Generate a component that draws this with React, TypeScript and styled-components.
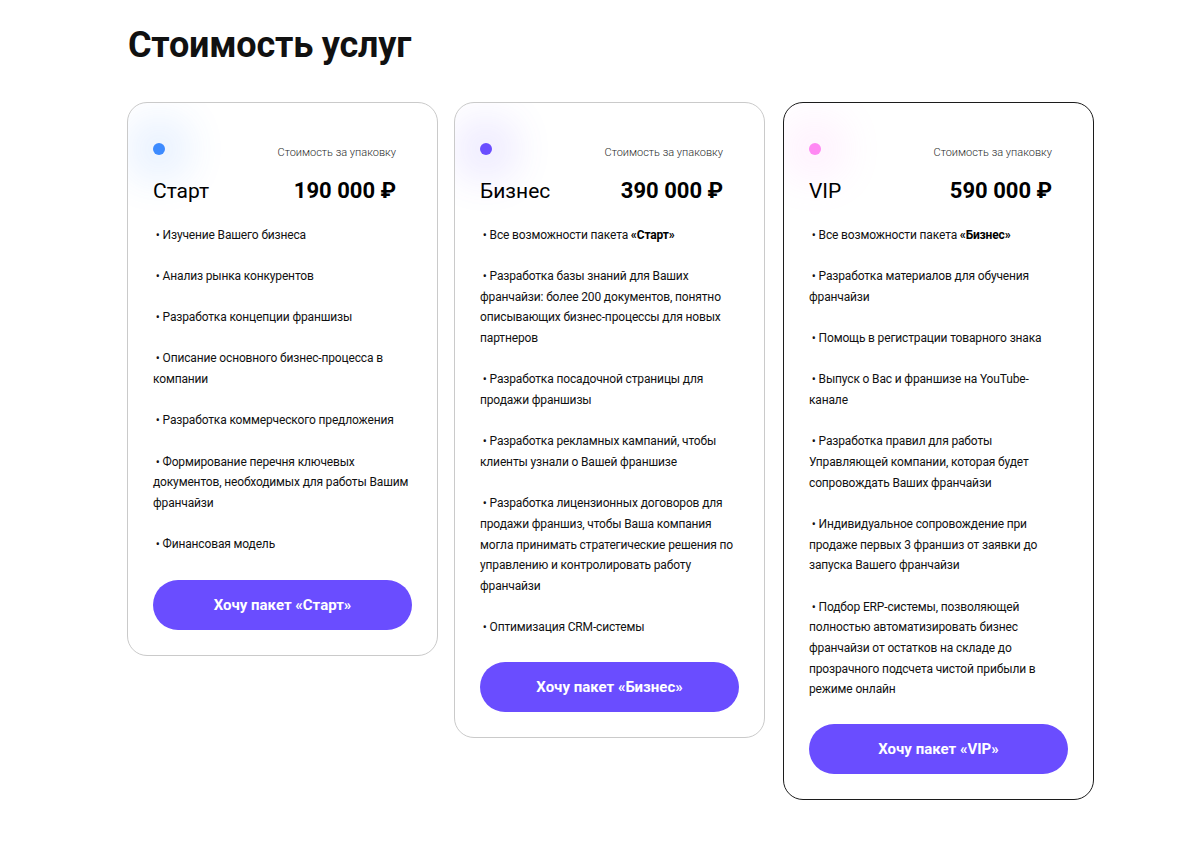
import type { FC } from 'react'
import styled, { createGlobalStyle } from 'styled-components'

interface Plan {
  name: string
  price: string
  dot: string
  glow: string
  featured?: boolean
  items: { text: string; bold?: string }[]
  cta: string
}

const plans: Plan[] = [
  {
    name: 'Старт',
    price: '190 000 ₽',
    dot: '#3d8bff',
    glow: 'rgba(61, 139, 255, 0.10)',
    items: [
      { text: 'Изучение Вашего бизнеса' },
      { text: 'Анализ рынка конкурентов' },
      { text: 'Разработка концепции франшизы' },
      { text: 'Описание основного бизнес-процесса в компании' },
      { text: 'Разработка коммерческого предложения' },
      { text: 'Формирование перечня ключевых документов, необходимых для работы Вашим франчайзи' },
      { text: 'Финансовая модель' },
    ],
    cta: 'Хочу пакет «Старт»',
  },
  {
    name: 'Бизнес',
    price: '390 000 ₽',
    dot: '#6a4dff',
    glow: 'rgba(106, 77, 255, 0.10)',
    items: [
      { text: 'Все возможности пакета ', bold: '«Старт»' },
      { text: 'Разработка базы знаний для Ваших франчайзи: более 200 документов, понятно описывающих бизнес-процессы для новых партнеров' },
      { text: 'Разработка посадочной страницы для продажи франшизы' },
      { text: 'Разработка рекламных кампаний, чтобы клиенты узнали о Вашей франшизе' },
      { text: 'Разработка лицензионных договоров для продажи франшиз, чтобы Ваша компания могла принимать стратегические решения по управлению и контролировать работу франчайзи' },
      { text: 'Оптимизация CRM-системы' },
    ],
    cta: 'Хочу пакет «Бизнес»',
  },
  {
    name: 'VIP',
    price: '590 000 ₽',
    dot: '#ff88f3',
    glow: 'rgba(255, 136, 243, 0.10)',
    featured: true,
    items: [
      { text: 'Все возможности пакета ', bold: '«Бизнес»' },
      { text: 'Разработка материалов для обучения франчайзи' },
      { text: 'Помощь в регистрации товарного знака' },
      { text: 'Выпуск о Вас и франшизе на YouTube-\nканале' },
      { text: 'Разработка правил для работы Управляющей компании, которая будет сопровождать Ваших франчайзи' },
      { text: 'Индивидуальное сопровождение при продаже первых 3 франшиз от заявки до запуска Вашего франчайзи' },
      { text: 'Подбор ERP-системы, позволяющей полностью автоматизировать бизнес франчайзи от остатков на складе до прозрачного подсчета чистой прибыли в режиме онлайн' },
    ],
    cta: 'Хочу пакет «VIP»',
  },
]

const App: FC = () => (
  <>
    <GlobalStyle />
    <Page>
      <Heading>Стоимость услуг</Heading>
      <Cards>
        {plans.map(plan => (
          <Card key={plan.name} $featured={plan.featured}>
            <CardTop>
              <Dot $color={plan.dot} $glow={plan.glow} />
              <PriceNote>Стоимость за упаковку</PriceNote>
            </CardTop>
            <TitleRow>
              <PlanName>{plan.name}</PlanName>
              <Price>{plan.price}</Price>
            </TitleRow>
            <Features>
              {plan.items.map(item => (
                <Feature key={item.text}>
                  {`\u00a0• ${item.text}`}
                  {item.bold && <b>{item.bold}</b>}
                </Feature>
              ))}
            </Features>
            <OrderButton type="button">{plan.cta}</OrderButton>
          </Card>
        ))}
      </Cards>
    </Page>
  </>
)

const GlobalStyle = createGlobalStyle`
  body {
    margin: 0;
    background: #fff;
    font-family: Roboto, 'Noto Sans', sans-serif;
    color: #111;
  }
`

const Page = styled.div`
  padding: 20px 0 40px 127px;
`

const Heading = styled.h1`
  margin: 0 0 32px 1px;
  font-size: 36px;
  line-height: 50px;
  font-weight: 700;
  letter-spacing: -0.2px;
  color: #111;
`

const Cards = styled.div`
  display: flex;
  align-items: flex-start;
  gap: 16px;

  & > :last-child {
    margin-left: 2px;
  }
`

const Card = styled.div<{ $featured?: boolean }>`
  width: 311px;
  box-sizing: border-box;
  padding: 40px 25px 25px;
  border: 1px solid ${p => (p.$featured ? '#1c1c1c' : '#cacaca')};
  border-radius: 20px;
  background: #fff;
  overflow: hidden;
`

const CardTop = styled.div`
  display: flex;
  align-items: flex-start;
  justify-content: space-between;
  padding-right: 16px;
`

const Dot = styled.span<{ $color: string; $glow: string }>`
  width: 12px;
  height: 12px;
  border-radius: 50%;
  background: ${p => p.$color};
  box-shadow: 0 0 36px 26px ${p => p.$glow};
`

const PriceNote = styled.span`
  margin-top: 1px;
  font-size: 11px;
  line-height: 18px;
  font-weight: 300;
  color: #2a2a2a;
`

const TitleRow = styled.div`
  display: flex;
  align-items: center;
  justify-content: space-between;
  margin-top: 15px;
  padding-right: 16px;
  line-height: 28px;
`

const PlanName = styled.span`
  font-size: 21px;
  font-weight: 400;
  color: #000;
`

const Price = styled.span`
  font-size: 22px;
  font-weight: 700;
  color: #000;
`

const Features = styled.ul`
  list-style: none;
  margin: 19.5px 0 0;
  padding: 0;
  display: flex;
  flex-direction: column;
  gap: 20.67px;
`

const Feature = styled.li`
  font-size: 12px;
  line-height: 20.67px;
  letter-spacing: -0.15px;
  white-space: pre-line;
  color: #111;

  b {
    font-weight: 700;
    color: #000;
  }
`

const OrderButton = styled.button`
  display: block;
  width: 100%;
  height: 50px;
  margin-top: 24.5px;
  border: none;
  border-radius: 25px;
  background: #6a4dff;
  color: #fff;
  font-family: Roboto, 'Noto Sans', sans-serif;
  font-size: 15px;
  font-weight: 700;
  cursor: pointer;
`

export default App
